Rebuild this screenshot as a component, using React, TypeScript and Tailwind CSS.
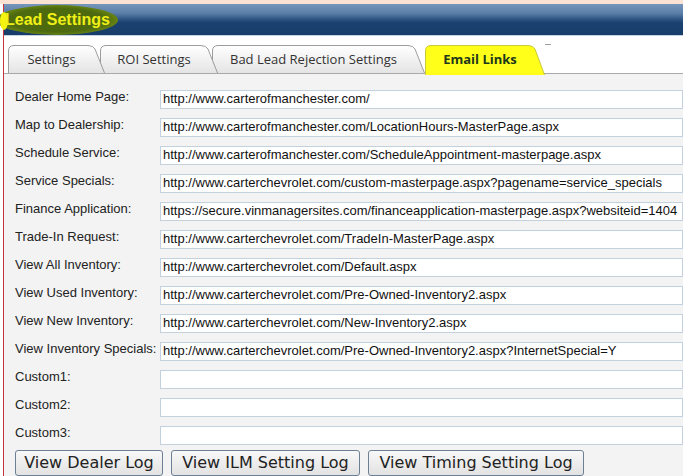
import React from 'react';

const rows: { label: string; value: string }[] = [
  { label: 'Dealer Home Page:', value: 'http://www.carterofmanchester.com/' },
  { label: 'Map to Dealership:', value: 'http://www.carterofmanchester.com/LocationHours-MasterPage.aspx' },
  { label: 'Schedule Service:', value: 'http://www.carterofmanchester.com/ScheduleAppointment-masterpage.aspx' },
  { label: 'Service Specials:', value: 'http://www.carterchevrolet.com/custom-masterpage.aspx?pagename=service_specials' },
  { label: 'Finance Application:', value: 'https://secure.vinmanagersites.com/financeapplication-masterpage.aspx?websiteid=1404' },
  { label: 'Trade-In Request:', value: 'http://www.carterchevrolet.com/TradeIn-MasterPage.aspx' },
  { label: 'View All Inventory:', value: 'http://www.carterchevrolet.com/Default.aspx' },
  { label: 'View Used Inventory:', value: 'http://www.carterchevrolet.com/Pre-Owned-Inventory2.aspx' },
  { label: 'View New Inventory:', value: 'http://www.carterchevrolet.com/New-Inventory2.aspx' },
  { label: 'View Inventory Specials:', value: 'http://www.carterchevrolet.com/Pre-Owned-Inventory2.aspx?InternetSpecial=Y' },
  { label: 'Custom1:', value: '' },
  { label: 'Custom2:', value: '' },
  { label: 'Custom3:', value: '' },
];

function Tab({
  label,
  width,
  className,
  active = false,
}: {
  label: string;
  width: number;
  className: string;
  active?: boolean;
}) {
  const h = active ? 32 : 30;
  const d = `M0.5,${h} L0.5,8 Q0.5,2.5 6,2.5 L${width - 17},2.5 Q${width - 12},2.5 ${width - 10},6 L${width - 0.5},${h}`;
  return (
    <div className={`relative h-[30px] shrink-0 ${className}`}>
      <svg
        className="absolute left-0 top-0"
        width={width}
        height={h}
        viewBox={`0 0 ${width} ${h}`}
      >
        <defs>
          <linearGradient id="tabfill" x1="0" y1="0" x2="0" y2="1">
            <stop offset="0" stopColor="#ffffff" />
            <stop offset="1" stopColor="#e4e4e4" />
          </linearGradient>
        </defs>
        <path
          d={d}
          fill={active ? '#ffff1a' : 'url(#tabfill)'}
          stroke={active ? '#c9c93a' : '#9c9c9c'}
          strokeWidth="1"
        />
      </svg>
      <span
        className={`relative flex h-full items-center justify-center pr-[10px] pt-[3px] font-['Open_Sans',sans-serif] text-[13px] ${
          active ? 'font-bold text-[#20381a]' : 'text-[#333]'
        }`}
      >
        {label}
      </span>
    </div>
  );
}

export default function App() {
  return (
    <div className="relative h-[476px] w-[683px] overflow-hidden bg-white font-['Liberation_Sans',Arial,sans-serif]">
      {/* top strip */}
      <div className="h-[4px] bg-[#fbe3d3]" />

      <div className="ml-[3px] flex h-[472px] flex-col border-l border-[#c4343a]">
        {/* Header */}
        <div className="relative h-[32px] bg-[linear-gradient(to_bottom,#7696bb_0%,#5a7fa8_30%,#2c5482_50%,#1a4170_60%,#183d6a_100%)]">
          <span className="absolute left-[-8px] top-[1px] h-[30px] w-[122px] rounded-[50%] bg-[radial-gradient(ellipse_at_center,#4f6a0c_0%,#4d6a10_55%,#6f8a12_75%,rgba(120,140,20,0)_100%)]" />
          <span className="absolute left-[-4px] top-[8px] h-[18px] w-[8px] rounded-[50%] bg-[#f4f410]" />
          <span className="relative flex h-full items-center pl-[1px] text-[16px] font-bold text-[#f0f018]">
            Lead Settings
          </span>
        </div>
        <div className="h-[1px] bg-[#c5d2e0]" />
        <div className="h-[7px] bg-white" />

        {/* Tabs */}
        <div className="flex h-[31px] border-b border-[#a9a9a9] bg-white pl-[4px]">
          <Tab label="Settings" width={97} className="z-[4] w-[97px]" />
          <Tab label="ROI Settings" width={118} className="z-[3] -ml-[5px] w-[118px]" />
          <Tab label="Bad Lead Rejection Settings" width={213} className="z-[2] -ml-[6px] w-[213px]" />
          <Tab label="Email Links" width={120} className="z-[5] w-[120px]" active />
          <div className="mt-[1px] h-[1px] w-[6px] bg-[#9c9c9c]" />
        </div>

        {/* Form */}
        <div className="flex-1 bg-[#f3f3f3] pt-[11px]">
          {rows.map((r) => (
            <div key={r.label} className="flex h-[28px] items-center">
              <div className="mb-[4px] w-[156px] shrink-0 whitespace-nowrap pl-[11px] text-[13px] text-[#222]">
                {r.label}
              </div>
              <div className="flex h-[19px] min-w-0 flex-1 items-center overflow-hidden whitespace-nowrap border border-[#c3d0de] bg-white pl-[2px] text-[13px] text-[#111]">
                {r.value}
              </div>
            </div>
          ))}

          {/* Buttons */}
          <div className="flex gap-[8px] pl-[11px] pt-[1px]">
            <button className="flex h-[26px] w-[148px] items-center justify-center rounded-[3px] border border-[#6c7f95] bg-[linear-gradient(to_bottom,#f8f8f8,#e2e2e2)] font-['DejaVu_Sans',Verdana,sans-serif] text-[16px] text-[#222]">
              View Dealer Log
            </button>
            <button className="flex h-[26px] w-[189px] items-center justify-center rounded-[3px] border border-[#6c7f95] bg-[linear-gradient(to_bottom,#f8f8f8,#e2e2e2)] font-['DejaVu_Sans',Verdana,sans-serif] text-[16px] text-[#222]">
              View ILM Setting Log
            </button>
            <button className="flex h-[26px] w-[216px] items-center justify-center rounded-[3px] border border-[#6c7f95] bg-[linear-gradient(to_bottom,#f8f8f8,#e2e2e2)] font-['DejaVu_Sans',Verdana,sans-serif] text-[16px] text-[#222]">
              View Timing Setting Log
            </button>
          </div>
        </div>
      </div>
    </div>
  );
}
